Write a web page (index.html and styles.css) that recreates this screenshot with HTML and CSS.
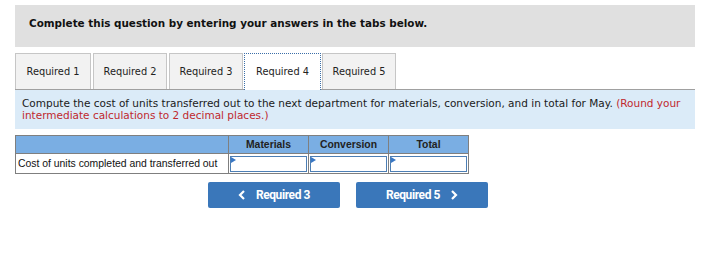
FILE: index.html
```html
<!DOCTYPE html>
<html lang="en">
<head>
    <meta charset="UTF-8">
    <title>Required 4</title>
    <link rel="stylesheet" href="styles.css">
</head>
<body>
    <div class="question">
        <div class="intro">Complete this question by entering your answers in the tabs below.</div>

        <div class="tabs">
            <div class="tab first">Required 1</div>
            <div class="tab">Required 2</div>
            <div class="tab">Required 3</div>
            <div class="tab active">Required 4</div>
            <div class="tab">Required 5</div>
        </div>

        <div class="prompt">
            Compute the cost of units transferred out to the next department for materials, conversion, and in total for May.
            <span class="note">(Round your intermediate calculations to 2 decimal places.)</span>
        </div>

        <table class="answer">
            <tr>
                <th class="label-col"></th>
                <th>Materials</th>
                <th>Conversion</th>
                <th>Total</th>
            </tr>
            <tr>
                <td class="label">Cost of units completed and transferred out</td>
                <td class="cell"><div class="input"></div></td>
                <td class="cell"><div class="input"></div></td>
                <td class="cell"><div class="input"></div></td>
            </tr>
        </table>

        <div class="nav">
            <button class="nav-btn">
                <svg width="8" height="10" viewBox="0 0 8 10"><path d="M6 1 L2 5 L6 9" fill="none" stroke="#fff" stroke-width="2.2"/></svg>
                <span>Required 3</span>
            </button>
            <button class="nav-btn">
                <span>Required 5</span>
                <svg width="8" height="10" viewBox="0 0 8 10"><path d="M2 1 L6 5 L2 9" fill="none" stroke="#fff" stroke-width="2.2"/></svg>
            </button>
        </div>
    </div>
</body>
</html>
```

FILE: styles.css
```css
body {
    margin: 0;
    background: #fff;
    font-family: "DejaVu Sans", Verdana, sans-serif;
    color: #000;
}

.question {
    width: 680px;
    padding: 5px 0 0 15px;
}

.intro {
    height: 42px;
    box-sizing: border-box;
    padding: 12px 0 0 14px;
    background-color: #e0e0e0;
    font-size: 10.4px;
    font-weight: bold;
    color: #111;
}

.tabs {
    display: flex;
    gap: 2px;
    margin-top: 6px;
    border-bottom: 1px solid #a0a0a0;
}

.tab {
    width: 74px;
    height: 36px;
    box-sizing: border-box;
    padding-top: 12px;
    background-color: #f2f2f2;
    border: 1px solid #c6c6c6;
    border-bottom: none;
    text-align: center;
    font-size: 9.8px;
    color: #222;
}

.tab.first {
    width: 76px;
}

.tab.active {
    width: 77px;
    height: 37px;
    margin: 0 -1px -1px;
    background-color: #fff;
    border: 1px dotted #3a6ea8;
    border-bottom: none;
}

.prompt {
    height: 39px;
    box-sizing: border-box;
    padding: 7px 8px 0 7px;
    background-color: #dbebf8;
    font-size: 10.5px;
    line-height: 12px;
    color: #1a1a1a;
}

.prompt .note {
    color: #c0282e;
}

.answer {
    margin-top: 6px;
    border-collapse: collapse;
    font-family: "Liberation Sans", Arial, sans-serif;
    font-size: 10.4px;
}

.answer th {
    height: 17px;
    width: 79px;
    padding: 0;
    background-color: #7aaee3;
    border: 1px solid #7f7f7f;
    font-weight: bold;
    color: #222;
}

.answer th.label-col {
    width: 212px;
}

.answer td {
    height: 17px;
    padding: 0;
    border: 1px solid #7f7f7f;
}

.answer td.label {
    padding-left: 2px;
    color: #111;
}

.answer td.cell {
    padding: 1px;
}

.input {
    position: relative;
    height: 14px;
    border: 1px solid #4d7fb5;
    background: #fff;
}

.input::before {
    content: "";
    position: absolute;
    left: 0;
    top: 0;
    border-left: 5px solid #3a78c4;
    border-top: 3px solid transparent;
    border-bottom: 3px solid transparent;
}

.nav {
    display: flex;
    gap: 16px;
    margin-top: 8px;
    padding-left: 193px;
}

.nav-btn {
    display: flex;
    align-items: center;
    justify-content: center;
    gap: 10px;
    width: 132px;
    height: 26px;
    padding: 0;
    background-color: #3a77ba;
    border: none;
    border-radius: 2px;
    font-family: Roboto, sans-serif;
    font-size: 12px;
    font-weight: bold;
    letter-spacing: -0.4px;
    color: #fff;
}
```
